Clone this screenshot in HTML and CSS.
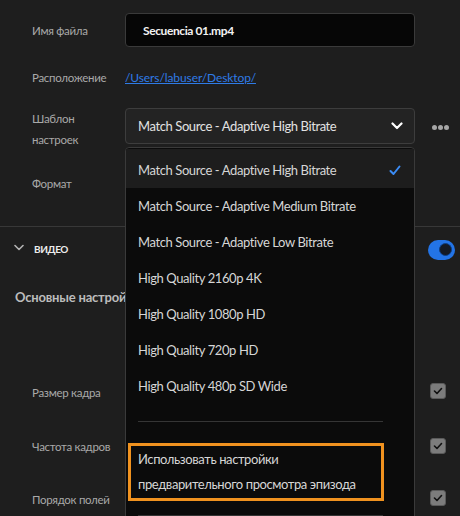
FILE: index.html
```html
<!DOCTYPE html>
<html lang="ru">
<head>
<meta charset="utf-8">
<title>Export</title>
<link rel="stylesheet" href="styles.css">
</head>
<body>
<div class="panel">
  <div class="row r-name">
    <span class="label">Имя файла</span>
    <div class="input">Secuencia 01.mp4</div>
  </div>
  <div class="row r-loc">
    <span class="label">Расположение</span>
    <a class="link" href="#">/Users/labuser/Desktop/</a>
  </div>
  <div class="row r-preset">
    <span class="label two">Шаблон<br>настроек</span>
    <div class="select">
      <span>Match Source - Adaptive High Bitrate</span>
      <svg class="chev" width="12" height="8" viewBox="0 0 12 8"><path d="M1.5 1.5 L6 6 L10.5 1.5" fill="none" stroke="#ffffff" stroke-width="2.2" stroke-linecap="round" stroke-linejoin="round"/></svg>
    </div>
    <div class="more"><i></i><i></i><i></i></div>
  </div>
  <div class="row r-format">
    <span class="label">Формат</span>
  </div>
  <div class="divider"></div>
  <div class="section-head">
    <svg class="sec-chev" width="10" height="7" viewBox="0 0 10 7"><path d="M1 1.5 L5 5.5 L9 1.5" fill="none" stroke="#b4b4b4" stroke-width="1.6" stroke-linecap="round" stroke-linejoin="round"/></svg>
    <span class="sec-title">ВИДЕО</span>
    <span class="toggle"><span class="knob"></span></span>
  </div>
  <div class="subhead">Основные настройки видео</div>
  <div class="row check-row c1">
    <span class="label">Размер кадра</span>
    <span class="checkbox"><svg width="10" height="8" viewBox="0 0 10 8"><path d="M1.5 4 L4 6.5 L8.5 1.5" fill="none" stroke="#111" stroke-width="1.6" stroke-linecap="round" stroke-linejoin="round"/></svg></span>
  </div>
  <div class="row check-row c2">
    <span class="label">Частота кадров</span>
    <span class="checkbox"><svg width="10" height="8" viewBox="0 0 10 8"><path d="M1.5 4 L4 6.5 L8.5 1.5" fill="none" stroke="#111" stroke-width="1.6" stroke-linecap="round" stroke-linejoin="round"/></svg></span>
  </div>
  <div class="row check-row c3">
    <span class="label">Порядок полей</span>
    <span class="checkbox"><svg width="10" height="8" viewBox="0 0 10 8"><path d="M1.5 4 L4 6.5 L8.5 1.5" fill="none" stroke="#111" stroke-width="1.6" stroke-linecap="round" stroke-linejoin="round"/></svg></span>
  </div>

  <div class="menu">
    <div class="item selected">
      <span>Match Source - Adaptive High Bitrate</span>
      <svg class="tick" width="12" height="11" viewBox="0 0 12 11"><path d="M1.5 6 L4.5 9 L10.5 1.5" fill="none" stroke="#3b8cf5" stroke-width="2" stroke-linecap="round" stroke-linejoin="round"/></svg>
    </div>
    <div class="item">Match Source - Adaptive Medium Bitrate</div>
    <div class="item">Match Source - Adaptive Low Bitrate</div>
    <div class="item">High Quality 2160p 4K</div>
    <div class="item">High Quality 1080p HD</div>
    <div class="item">High Quality 720p HD</div>
    <div class="item">High Quality 480p SD Wide</div>
    <div class="sep"></div>
    <div class="item focused">Использовать настройки<br>предварительного просмотра эпизода</div>
    <div class="sep sep2"></div>
  </div>
</div>
</body>
</html>
```

FILE: styles.css
```css
* { box-sizing: border-box; }
html, body {
  margin: 0;
  padding: 0;
  background: #1e1e1e;
  overflow: hidden;
}
body {
  width: 460px;
  height: 516px;
  font-family: Lato, "Open Sans", sans-serif;
  color: #d8d8d8;
}
.panel {
  position: relative;
  display: flex;
  flex-direction: column;
  padding-top: 13px;
  height: 516px;
}
.row {
  display: flex;
  align-items: center;
  padding-left: 32px;
}
.label {
  width: 93px;
  flex: none;
  font-size: 11.5px;
  letter-spacing: -0.3px;
  color: #a9a9a9;
}
.label.two {
  line-height: 21px;
  padding-top: 5px;
}
.r-name { height: 34px; }
.input {
  width: 290px;
  height: 34px;
  background: #060606;
  border: 1px solid #3a3a3a;
  border-radius: 4px;
  display: flex;
  align-items: center;
  padding-left: 17px;
  font-size: 12px;
  letter-spacing: -0.4px;
  font-weight: 700;
  color: #f2f2f2;
}
.r-loc { height: 32px; margin-top: 15px; }
.link {
  font-size: 12px;
  letter-spacing: -0.1px;
  color: #2f7be6;
  text-decoration: underline;
}
.r-preset { height: 36px; margin-top: 15px; }
.select {
  width: 290px;
  height: 36px;
  background: #232323;
  border: 1px solid #3d3d3d;
  border-radius: 4px;
  display: flex;
  align-items: center;
  justify-content: space-between;
  padding: 0 11px 0 12px;
  font-size: 13px;
  letter-spacing: -0.4px;
  color: #e2e2e2;
}
.more {
  display: flex;
  gap: 1px;
  margin-left: 17px;
  padding-top: 2px;
}
.more i {
  width: 5px;
  height: 5px;
  border-radius: 50%;
  background: #a6a6a6;
}
.r-format { height: 36px; margin-top: 21px; }
.divider {
  height: 1px;
  background: #383838;
  margin-top: 25px;
}
.section-head {
  height: 44px;
  display: flex;
  align-items: center;
  padding-left: 14px;
  padding-right: 5px;
}
.sec-chev { margin-right: 10px; margin-top: -2px; }
.sec-title {
  font-size: 10px;
  letter-spacing: -0.4px;
  font-weight: 700;
  color: #ececec;
  flex: 1;
}
.toggle {
  width: 27px;
  height: 20px;
  border-radius: 10px;
  background: #2374e6;
  display: flex;
  align-items: center;
  justify-content: flex-end;
  padding-right: 3px;
  margin-top: 2px;
}
.knob {
  width: 13px;
  height: 13px;
  border-radius: 50%;
  background: #141a24;
  border: 1px solid #0f3d80;
}
.subhead {
  height: 30px;
  margin-top: 12px;
  padding-left: 15px;
  display: flex;
  align-items: center;
  font-size: 13px;
  letter-spacing: -0.2px;
  font-weight: 700;
  color: #bcbcbc;
  white-space: nowrap;
}
.check-row {
  height: 36px;
  justify-content: space-between;
  padding-right: 14px;
}
.c1 { margin-top: 62px; }
.c2 { margin-top: 19px; }
.c3 { margin-top: 17px; }
.check-row .label { width: auto; padding-top: 2px; }
.checkbox {
  width: 16px;
  height: 16px;
  border-radius: 3px;
  background: #7c7c7c;
  border: 1px solid #5a5a5a;
  display: flex;
  align-items: center;
  justify-content: center;
}

/* dropdown menu overlay */
.menu {
  position: absolute;
  left: 125px;
  top: 147px;
  width: 290px;
  height: 380px;
  background: #0b0b0b;
  border: 1px solid #3a3a3a;
  border-radius: 4px 4px 0 0;
  padding-top: 4px;
  display: flex;
  flex-direction: column;
}
.item {
  height: 36px;
  flex: none;
  display: flex;
  align-items: center;
  justify-content: space-between;
  padding: 0 12px;
  font-size: 13px;
  letter-spacing: -0.4px;
  color: #d6d6d6;
  white-space: nowrap;
}
.item.selected {
  background: #1d1d1d;
  margin-top: -3px;
  padding-top: 3px;
  height: 39px;
}
.tick { margin-right: 1px; }
.sep {
  height: 1px;
  background: #353535;
  margin: 17px 31px 0 12px;
  flex: none;
}
.item.focused {
  margin: 21px 30px 0 2px;
  height: 58px;
  border: 3px solid #f0921f;
  padding: 0 7px;
  line-height: 25px;
  display: block;
  padding-top: 1px;
}
.sep2 { margin-top: 14px; }
```
